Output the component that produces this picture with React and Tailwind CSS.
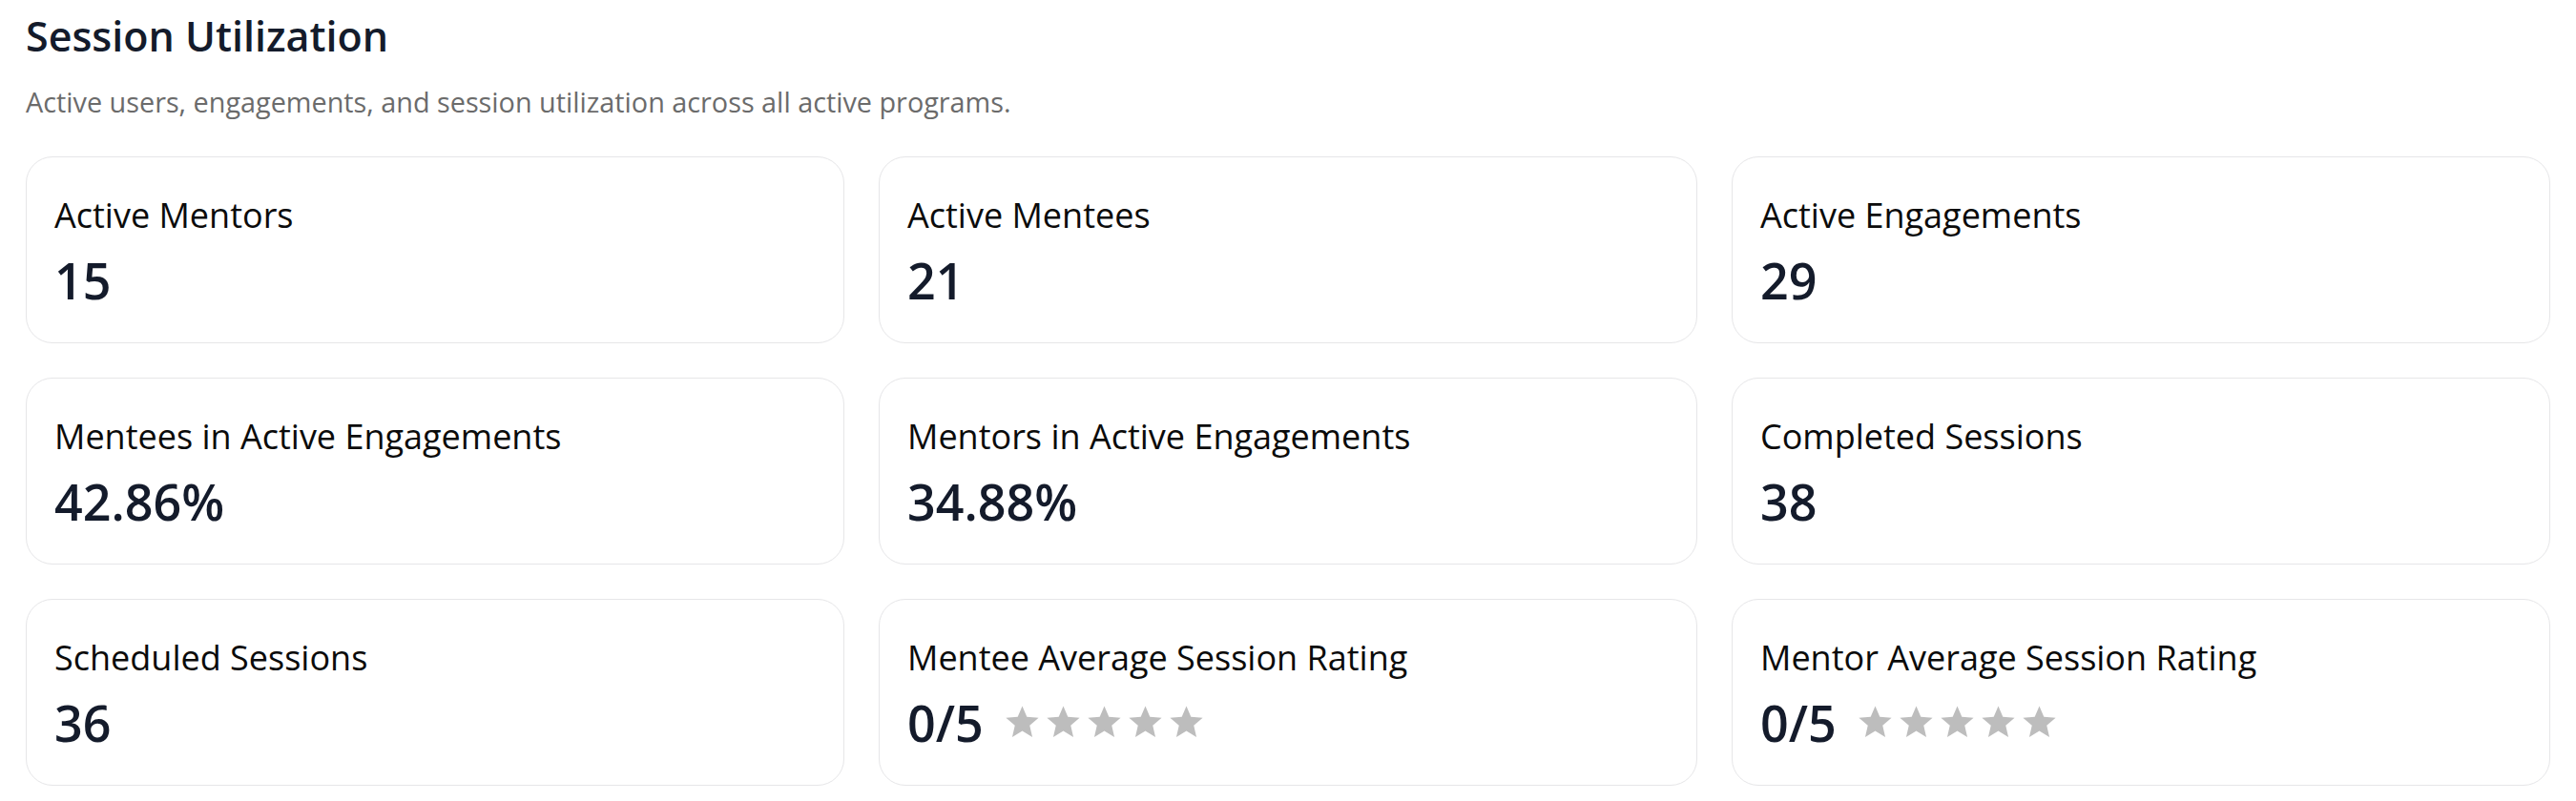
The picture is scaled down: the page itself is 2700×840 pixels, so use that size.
import React from 'react';

const stats = [
  { label: 'Active Mentors', value: '15' },
  { label: 'Active Mentees', value: '21' },
  { label: 'Active Engagements', value: '29' },
  { label: 'Mentees in Active Engagements', value: '42.86%' },
  { label: 'Mentors in Active Engagements', value: '34.88%' },
  { label: 'Completed Sessions', value: '38' },
  { label: 'Scheduled Sessions', value: '36' },
  { label: 'Mentee Average Session Rating', value: '0/5', rating: 0 },
  { label: 'Mentor Average Session Rating', value: '0/5', rating: 0 },
];

const StarIcon = ({ filled }) => (
  <svg viewBox="0 0 24 24" className="w-[41px] h-[41px]">
    <path
      d="M12 17.27L18.18 21l-1.64-7.03L22 9.24l-7.19-.61L12 2 9.19 8.63 2 9.24l5.46 4.73L5.82 21z"
      fill={filled ? '#f5b400' : '#bdbdbd'}
    />
  </svg>
);

const StatCard = ({ label, value, rating }) => (
  <div className="bg-white border border-[#e6e6e8] rounded-[28px] px-[29px] pt-[36px] pb-[33px]">
    <div className="text-[36px] leading-[50px] text-[#0b0b0b]">{label}</div>
    <div className="mt-[10px] flex items-center">
      <span className="text-[52px] leading-[65px] font-semibold text-[#141b2b]">{value}</span>
      {rating !== undefined && (
        <div className="ml-[20px] flex items-center gap-[2px]">
          {[1, 2, 3, 4, 5].map((i) => (
            <StarIcon key={i} filled={i <= rating} />
          ))}
        </div>
      )}
    </div>
  </div>
);

export default function App() {
  return (
    <div className="w-[2700px] h-[840px] bg-white px-[27px] pt-[10px] font-['Open_Sans',sans-serif]">
      {/* Header */}
      <h2 className="text-[43px] leading-[56px] font-semibold text-[#141b2b]">Session Utilization</h2>
      <p className="mt-[21px] text-[28.8px] leading-[40px] text-[#6b6b6b]">
        Active users, engagements, and session utilization across all active programs.
      </p>

      {/* Stat grid */}
      <div className="mt-[37px] grid grid-cols-3 gap-[36px]">
        {stats.map((s) => (
          <StatCard key={s.label} {...s} />
        ))}
      </div>
    </div>
  );
}
